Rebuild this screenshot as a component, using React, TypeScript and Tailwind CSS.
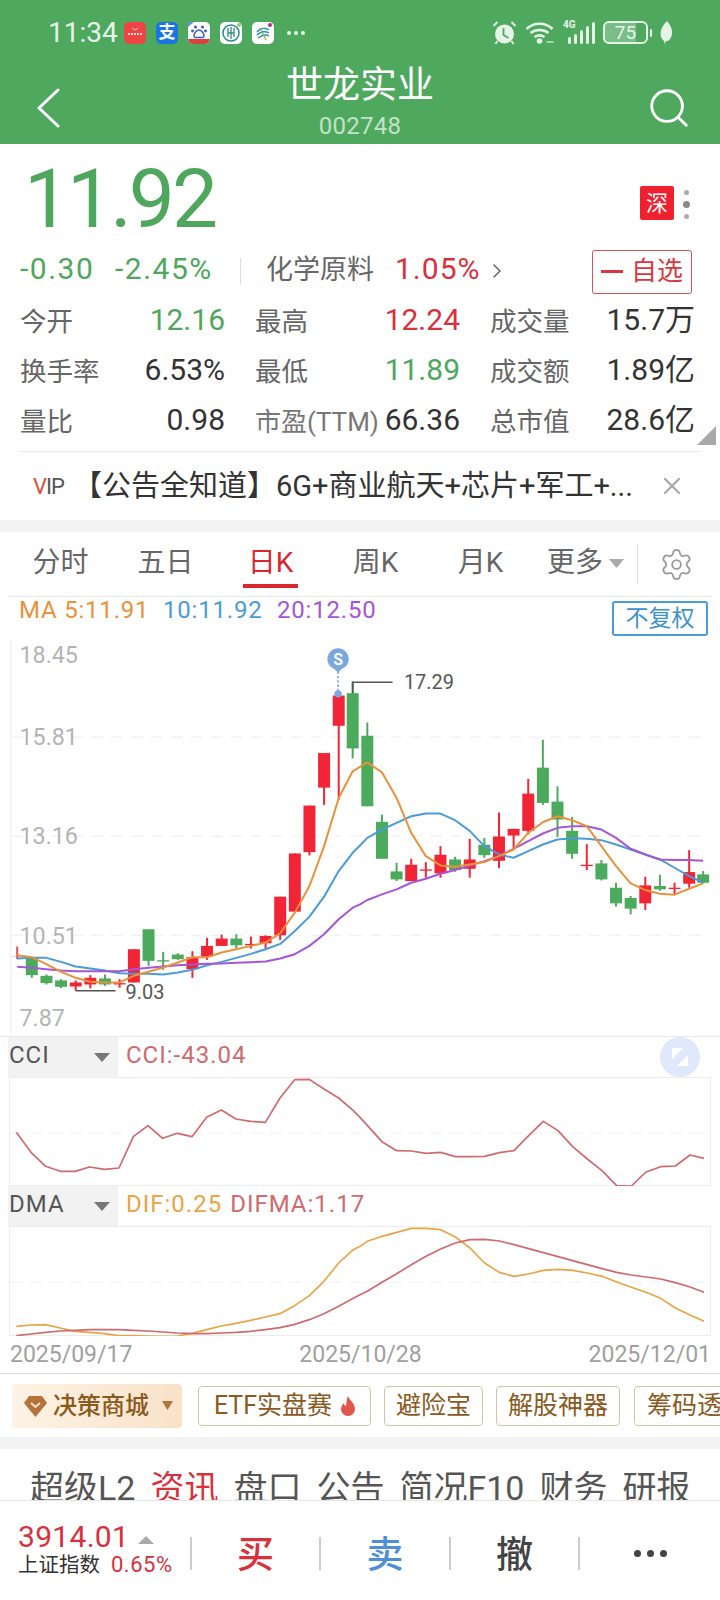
import { Search, Settings, X, ChevronRight } from "lucide-react";

type Candle = [number, number, number, number, number, "r" | "g"];

// x, body top, body bottom, wick top, wick bottom (3 units = 1px)
const candles: Candle[] = [
  [93, 985, 1038, 985, 1046, "g"],
  [137, 1040, 1062, 1036, 1066, "g"],
  [181, 1054, 1073, 1050, 1077, "g"],
  [225, 1060, 1072, 1054, 1085, "r"],
  [269, 1046, 1066, 1038, 1078, "r"],
  [313, 1048, 1066, 1036, 1070, "g"],
  [357, 1062, 1066, 1050, 1076, "r"],
  [400, 960, 1060, 960, 1060, "r"],
  [444, 900, 995, 900, 1010, "g"],
  [488, 993, 997, 968, 1022, "g"],
  [532, 976, 990, 972, 992, "g"],
  [576, 984, 1020, 966, 1046, "r"],
  [620, 950, 982, 926, 992, "r"],
  [664, 928, 950, 916, 950, "r"],
  [708, 928, 948, 915, 958, "g"],
  [752, 944, 948, 922, 958, "r"],
  [796, 920, 942, 918, 958, "r"],
  [840, 802, 918, 802, 932, "r"],
  [884, 672, 847, 672, 847, "r"],
  [928, 528, 668, 528, 678, "r"],
  [972, 370, 474, 370, 526, "r"],
  [1016, 197, 288, 197, 510, "r"],
  [1058, 190, 356, 155, 386, "g"],
  [1102, 318, 530, 278, 530, "g"],
  [1146, 577, 688, 555, 688, "g"],
  [1190, 726, 750, 700, 755, "g"],
  [1234, 706, 755, 688, 755, "r"],
  [1278, 720, 724, 698, 745, "r"],
  [1322, 676, 732, 650, 745, "r"],
  [1366, 690, 722, 682, 727, "g"],
  [1410, 690, 718, 628, 745, "r"],
  [1454, 646, 677, 625, 685, "g"],
  [1498, 621, 694, 549, 716, "r"],
  [1542, 598, 618, 598, 655, "r"],
  [1586, 492, 604, 448, 615, "r"],
  [1630, 414, 520, 330, 526, "g"],
  [1674, 516, 570, 470, 622, "g"],
  [1718, 604, 673, 562, 688, "g"],
  [1762, 706, 710, 644, 722, "r"],
  [1806, 702, 750, 692, 753, "g"],
  [1850, 775, 822, 760, 832, "g"],
  [1894, 806, 838, 800, 855, "g"],
  [1938, 768, 822, 742, 842, "r"],
  [1982, 770, 780, 736, 784, "g"],
  [2026, 775, 779, 760, 796, "r"],
  [2070, 728, 763, 662, 775, "r"],
  [2112, 735, 760, 725, 762, "g"],
];

const ma5 =
  "49,978 93,984 137,1005 181,1028 225,1046 269,1058 313,1060 357,1060 400,1040 444,1028 488,1015 532,1000 576,984 620,984 664,970 708,960 752,950 796,940 840,912 884,850 928,770 972,650 1016,505 1058,425 1102,398 1146,428 1190,505 1234,610 1278,680 1322,708 1366,712 1410,705 1454,698 1498,680 1542,660 1586,610 1630,578 1674,560 1718,572 1762,590 1806,650 1850,710 1894,762 1938,782 1982,793 2026,796 2070,778 2112,762";
const ma10 =
  "49,988 93,986 137,986 181,998 225,1012 269,1018 313,1024 357,1032 400,1034 444,1034 488,1036 532,1030 576,1022 620,1008 664,998 708,986 752,974 796,960 840,944 884,905 928,862 972,802 1016,725 1058,670 1080,648 1102,625 1146,600 1190,580 1234,560 1278,552 1322,552 1366,572 1410,604 1454,650 1498,675 1542,685 1586,665 1630,645 1674,630 1718,626 1762,628 1806,632 1850,645 1894,660 1938,675 1982,690 2026,715 2070,740 2112,760";
const ma20 =
  "49,1013 93,1016 137,1020 181,1024 225,1026 269,1026 313,1026 357,1026 400,1020 444,1016 488,1012 532,1008 576,1006 620,1004 664,1003 708,1001 752,999 796,997 840,988 884,975 928,950 972,915 1016,870 1058,835 1080,825 1102,812 1146,795 1190,780 1234,760 1278,748 1322,733 1366,722 1410,708 1454,695 1498,680 1542,658 1586,635 1630,612 1674,595 1718,590 1762,590 1806,600 1850,625 1894,658 1938,675 1982,690 2026,692 2070,692 2112,694";
const cci =
  "49,305 93,365 137,407 181,422 225,422 269,409 313,416 357,412 400,318 444,285 488,323 532,308 576,318 620,260 664,238 708,265 752,272 796,275 840,202 884,147 928,146 972,175 1016,202 1060,240 1080,260 1146,333 1190,360 1234,361 1278,368 1322,365 1366,378 1410,378 1454,377 1498,366 1542,360 1586,315 1630,272 1674,300 1718,348 1762,385 1806,420 1850,465 1894,466 1938,424 1982,408 2026,406 2070,373 2112,383";
const dif =
  "49,890 93,886 137,885 181,895 225,905 269,908 313,912 357,918 400,918 444,919 488,920 532,919 576,911 620,900 664,889 708,881 752,872 796,862 840,852 884,828 928,798 972,755 1016,700 1060,660 1080,650 1102,635 1146,620 1190,608 1234,596 1278,596 1322,600 1366,622 1410,655 1454,700 1498,728 1542,740 1586,733 1630,722 1674,719 1718,722 1762,730 1806,740 1850,757 1894,773 1938,788 1982,806 2026,835 2070,856 2112,875";
const difma =
  "49,918 93,913 137,908 181,904 225,902 269,900 313,900 357,900 400,902 444,904 488,907 532,910 576,912 620,912 664,910 708,908 752,905 796,900 840,894 884,884 928,870 972,852 1016,830 1060,806 1080,795 1102,785 1146,758 1190,732 1234,705 1278,680 1322,658 1366,640 1410,630 1454,629 1498,634 1542,645 1586,657 1630,669 1674,681 1718,693 1762,705 1806,717 1850,728 1894,736 1938,742 1982,748 2026,759 2070,772 2112,788";

function StatusBar() {
  return (
    <div className="flex h-[64px] items-center pl-[48px] pt-[1px] text-[#e6f4e8]">
      <span className="w-[76px] text-[28px] leading-none">11:34</span>
      <div className="flex gap-[10px]">
        <svg className="h-[22px] w-[22px]" viewBox="0 0 22 22">
          <rect width="22" height="22" rx="5" fill="#ef4444" />
          <path d="M8 6l3 2 3-2" stroke="#fff" strokeWidth="0.8" fill="none" />
          <path d="M4 12h14" stroke="#fff" strokeWidth="1.4" strokeDasharray="2 1" />
        </svg>
        <div className="flex h-[22px] w-[22px] items-center justify-center rounded-[5px] bg-[#1b74e4] text-[17px] font-bold leading-none text-white">
          支
        </div>
        <svg className="h-[22px] w-[22px]" viewBox="0 0 22 22">
          <rect width="22" height="22" rx="5" fill="#fff" />
          <path d="M0 17h22v0a5 5 0 0 1-5 5H5a5 5 0 0 1-5-5z" fill="#d9413c" />
          <circle cx="7.500" cy="5" r="1.500" fill="#3558c9" />
          <circle cx="14.500" cy="5" r="1.500" fill="#3558c9" />
          <circle cx="4.500" cy="9" r="1.400" fill="#3558c9" />
          <circle cx="17.500" cy="9" r="1.400" fill="#3558c9" />
          <path d="M11 8c3 0 5 4 5 6s-2 1.500-5 1.500-5 .5-5-1.500 2-6 5-6z" fill="none" stroke="#3558c9" strokeWidth="1.400" />
          <path d="M0 5V3a3 3 0 0 1 3-3h3z" fill="#6f8fe0" />
        </svg>
        <svg className="h-[22px] w-[22px]" viewBox="0 0 22 22">
          <rect width="22" height="22" rx="5" fill="#fff" />
          <circle cx="11" cy="11" r="8" fill="none" stroke="#2b8a86" strokeWidth="1.500" />
          <path d="M8 6v9M14 6v9M8 11h6M11 5v12" stroke="#2b8a86" strokeWidth="1.300" />
          <circle cx="19" cy="3" r="2" fill="#8fd37a" />
        </svg>
        <svg className="h-[22px] w-[22px]" viewBox="0 0 22 22">
          <rect width="22" height="22" rx="5" fill="#fff" />
          <path d="M5 10c4-5 9-4 12-2M5 13c4-4 9-4 12-2M6 16c4-3 8-4 11-2" stroke="#2c8fc4" strokeWidth="1.500" fill="none" />
          <path d="M8 6l6 12" stroke="#8bbf3f" strokeWidth="1.200" />
          <circle cx="18" cy="3" r="2" fill="#a2358a" />
        </svg>
      </div>
      <span className="ml-[13px] flex gap-[3px]">
        <i className="h-[4px] w-[4px] rounded-full bg-[#e6f4e8]" />
        <i className="h-[4px] w-[4px] rounded-full bg-[#e6f4e8]" />
        <i className="h-[4px] w-[4px] rounded-full bg-[#e6f4e8]" />
      </span>
      <div className="ml-auto mr-[47px] flex items-center">
        <svg className="h-[24px] w-[25px]" viewBox="0 0 24 24" fill="#e6f4e8">
          <path d="M1 5l4-4M23 5l-4-4" stroke="#e6f4e8" strokeWidth="1.800" />
          <circle cx="12" cy="13" r="9.500" />
          <path d="M11 7v7l5 3" stroke="#4ea95f" strokeWidth="1.800" fill="none" />
          <path d="M5 20l-2 3M19 20l2 3" stroke="#e6f4e8" strokeWidth="1.800" />
        </svg>
        <svg className="ml-[8px] h-[24px] w-[30px]" viewBox="0 0 29 24" fill="none" stroke="#e6f4e8" strokeWidth="2.600">
          <path d="M1 8c7-7 19-7 26 0M5 12c5-4 13-4 18 0M9 16c3-2 7-2 10 0" />
          <circle cx="14" cy="20" r="2.800" fill="#e6f4e8" stroke="none" />
          <path d="M21 21h7" strokeWidth="1.200" />
        </svg>
        <div className="relative ml-[8px] h-[24px] w-[32px]">
          <span className="absolute left-0 top-[-2px] text-[10px] font-bold leading-[12px]">4G</span>
          <svg className="h-[24px] w-[32px]" viewBox="0 0 32 24" fill="#e6f4e8">
            <rect x="5" y="16" width="3" height="7" rx="1.500" />
            <rect x="11" y="13" width="3" height="10" rx="1.500" />
            <rect x="17" y="9" width="3" height="14" rx="1.500" />
            <rect x="23" y="5" width="3" height="18" rx="1.500" />
            <rect x="29" y="1" width="3" height="22" rx="1.500" />
          </svg>
        </div>
        <div className="relative ml-[8px] flex h-[23px] w-[45px] items-center justify-center overflow-hidden rounded-[6px] border-2 border-[#e6f4e8] text-[19px] leading-none">
          <div className="absolute inset-y-0 left-0 w-[75%] bg-white/25" />
          <span className="relative">75</span>
        </div>
        <i className="ml-[2px] h-[8px] w-[2px] rounded-full bg-[#e6f4e8]" />
        <svg className="ml-[8px] h-[23px] w-[13px]" viewBox="0 0 13 23">
          <path d="M7 0c5 6 7 12 3 18-1 2-3 2-4 2l-1 3-1-3C-1 16-1 8 7 0z" fill="#e6f4e8" />
        </svg>
      </div>
    </div>
  );
}

function TitleBar() {
  return (
    <div className="relative flex h-[80px] flex-col items-center">
      <svg className="absolute left-[36px] top-[24px] h-[40px] w-[24px]" viewBox="0 0 24 40" fill="none">
        <path d="M22 2L3 20l19 18" stroke="#fff" strokeWidth="3" strokeLinecap="round" strokeLinejoin="round" />
      </svg>
      <div className="text-[37px] leading-[44px] text-white">世龙实业</div>
      <div className="mt-[4px] text-[24px] leading-[28px] tracking-[0.3px] text-[#c3e2c9]">002748</div>
      <Search
        className="absolute right-[28px] top-[21px] h-[46px] w-[46px] text-white"
        strokeWidth={1.500}
      />
    </div>
  );
}

function QuoteCell({
  label,
  value,
  color,
  wide,
}: {
  label: string;
  value: string;
  color: string;
  wide?: boolean;
}) {
  return (
    <div className="flex h-[50px] items-center justify-between">
      <span className={wide ? "text-[26px] text-[#777]" : "text-[26.500px] text-[#666]"}>{label}</span>
      <span className={`mt-[-5px] text-[30px] ${color}`}>{value}</span>
    </div>
  );
}

function Quote() {
  return (
    <div className="relative">
      <div className="flex h-[100px] items-start">
        <div className="ml-[24px] mt-[7px] text-[82px] leading-[96px] tracking-[-3px] text-[#4ea75d]">11.92</div>
        <div className="ml-auto mr-[46px] mt-[42px] flex h-[34px] w-[34px] items-center justify-center rounded-[2px] bg-[#f0202f] text-[22px] text-white">
          深
        </div>
        <div className="absolute right-[30px] top-[46px] flex flex-col items-center gap-[6px]">
          <i className="h-[5px] w-[5px] rounded-full bg-[#aaa]" />
          <i className="h-[7px] w-[7px] rounded-full bg-[#888]" />
          <i className="h-[5px] w-[5px] rounded-full bg-[#aaa]" />
        </div>
      </div>
      <div className="flex h-[53px] items-center pl-[20px]">
        <span className="mt-[-5px] w-[95px] text-[30px] tracking-[1.500px] text-[#4ea75d]">-0.30</span>
        <span className="mt-[-5px] w-[125px] text-[30px] tracking-[1.500px] text-[#4ea75d]">-2.45%</span>
        <i className="h-[26px] w-px bg-[#ddd]" />
        <span className="ml-[25px] text-[27px] text-[#666]">化学原料</span>
        <span className="ml-[21px] mt-[-5px] text-[30px] tracking-[1px] text-[#d9303c]">1.05%</span>
        <ChevronRight className="ml-[5px] h-[24px] w-[24px] text-[#666]" strokeWidth={1.500} />
        <div className="ml-auto mr-[28px] mt-[2px] flex h-[44px] w-[100px] items-center justify-center gap-[8px] rounded-[3px] border border-[#d9505a] text-[26px] text-[#d93842]">
          <i className="h-[3px] w-[22px] bg-[#d93842]" />
          <span>自选</span>
        </div>
      </div>
      <div className="grid grid-cols-[205px_205px_205px] gap-x-[30px] pl-[20px]">
        <QuoteCell label="今开" value="12.16" color="text-[#4ea75d]" />
        <QuoteCell label="最高" value="12.24" color="text-[#d9303c]" />
        <QuoteCell label="成交量" value="15.7万" color="text-[#333]" />
        <QuoteCell label="换手率" value="6.53%" color="text-[#333]" />
        <QuoteCell label="最低" value="11.89" color="text-[#4ea75d]" />
        <QuoteCell label="成交额" value="1.89亿" color="text-[#333]" />
        <QuoteCell label="量比" value="0.98" color="text-[#333]" />
        <QuoteCell label="市盈(TTM)" value="66.36" color="text-[#333]" wide />
        <QuoteCell label="总市值" value="28.6亿" color="text-[#333]" />
      </div>
      <svg className="absolute bottom-[7px] right-[4px] h-[19px] w-[19px]" viewBox="0 0 19 19">
        <path d="M19 0v19H0z" fill="#a9a9a9" />
      </svg>
      <div className="mx-[20px] mt-[4px] h-px bg-[#e8e8e8]" />
    </div>
  );
}

function Notice() {
  return (
    <div className="flex h-[68px] items-center pl-[33px]">
      <span className="w-[40px] shrink-0 text-[22px] tracking-[-1px] text-[#555]">
        <span className="text-[#d9503c]">V</span>IP
      </span>
      <span className="w-[556px] shrink-0 whitespace-nowrap text-[29px] leading-none text-[#333]">
        【公告全知道】6G+商业航天+芯片+军工+...
      </span>
      <X className="ml-[29px] h-[28px] w-[28px] text-[#aaa]" strokeWidth={2} />
    </div>
  );
}

function PeriodTabs() {
  const tabs = ["分时", "五日", "日K", "周K", "月K"];
  return (
    <div className="mx-[8px] flex h-[65px] items-start border-b border-[#e8e8e8] pt-[14px]">
      <div className="flex w-[525px]">
        {tabs.map((t) => (
          <div key={t} className="flex w-[105px] justify-center">
            <span
              className={
                t === "日K"
                  ? "border-b-4 border-[#d9272e] px-[5px] pb-[4px] text-[28px] leading-[34px] text-[#d9272e]"
                  : "border-b-4 border-transparent px-[5px] pb-[4px] text-[28px] leading-[34px] text-[#666]"
              }
            >
              {t}
            </span>
          </div>
        ))}
      </div>
      <span className="ml-[14px] text-[28px] leading-[34px] text-[#666]">更多</span>
      <svg className="ml-[6px] mt-[13px] h-[9px] w-[15px]" viewBox="0 0 15 9">
        <path d="M0 0h15L7.500 9z" fill="#aaa" />
      </svg>
      <i className="ml-[13px] mt-[-2px] h-[39px] w-px bg-[#ddd]" />
      <Settings className="ml-[21px] mt-[1px] h-[35px] w-[35px] text-[#999]" strokeWidth={1.200} />
    </div>
  );
}

function MaLegend() {
  return (
    <div className="flex h-[41px] items-start pl-[19px] text-[24px] leading-[26px] tracking-[0.8px]">
      <span className="w-[144px] text-[#e8923a]">MA 5:11.91</span>
      <span className="w-[114px] text-[#4b9bd8]">10:11.92</span>
      <span className="text-[#a555d6]">20:12.50</span>
      <span className="ml-auto mr-[12px] mt-[4px] flex h-[35px] w-[96px] items-center justify-center rounded-[3px] border-2 border-[#4b9bd8] text-[23px] leading-none tracking-normal text-[#3f93c9]">
        不复权
      </span>
    </div>
  );
}

function KChart() {
  const axis = [
    ["18.45", 75],
    ["15.81", 322],
    ["13.16", 620],
    ["10.51", 918],
    ["7.87", 1165],
  ] as const;
  return (
    <svg className="block h-[399px] w-[720px] border-b border-[#e8e8e8]" viewBox="0 24 2160 1197">
      <path d="M30 24v1197" stroke="#eee" strokeWidth="3" />
      {[322, 620, 918].map((y) => (
        <path key={y} d={`M30 ${y}H2127`} stroke="#eee" strokeWidth="3" strokeDasharray="36 24" />
      ))}
      <path d="M30 982H60" stroke="#f8d0d0" strokeWidth="3" />
      <path d="M49 952V990" stroke="#e0505a" strokeWidth="6" />
      {candles.map(([x, top, bottom, wickTop, wickBottom, c]) => {
        const fill = c === "r" ? "#f12535" : "#4caa5c";
        return (
          <g key={x}>
            <path d={`M${x} ${wickTop}V${wickBottom}`} stroke={fill} strokeWidth="6" />
            <rect x={x - 18} y={top} width="36" height={bottom - top} fill={fill} />
          </g>
        );
      })}
      <polyline points={ma10} fill="none" stroke="#4b9bd8" strokeWidth="6" strokeLinejoin="round" />
      <polyline points={ma20} fill="none" stroke="#a555d6" strokeWidth="6" strokeLinejoin="round" />
      <polyline points={ma5} fill="none" stroke="#e8923a" strokeWidth="6" strokeLinejoin="round" />
      <path d="M1014 125V190" stroke="#7aa7e0" strokeWidth="5" strokeDasharray="7 6" />
      <circle cx="1014" cy="192" r="11" fill="#7aa7e0" />
      <path d="M1000 114l14 14 14-14z" fill="#7aa7e0" />
      <circle cx="1014" cy="87" r="32" fill="#7aa7e0" />
      <text x="1014" y="104" textAnchor="middle" fontSize="48" fontWeight="700" fill="#fff">
        S
      </text>
      <path d="M1058 190V157H1178" fill="none" stroke="#555" strokeWidth="5" />
      <text x="1212" y="176" fontSize="60" fill="#555">
        17.29
      </text>
      <path d="M225 1085H345" stroke="#555" strokeWidth="5" />
      <text x="375" y="1109" fontSize="60" fill="#555">
        9.03
      </text>
      {axis.map(([t, y]) => (
        <text key={t} x="56" y={y + 25} fontSize="70" fill="#b4b4b4">
          {t}
        </text>
      ))}
    </svg>
  );
}

function IndicatorHead({ name, children }: { name: string; children: React.ReactNode }) {
  return (
    <div className="flex h-[40px] items-center text-[24px] leading-none tracking-[1px]">
      <div className="ml-[8px] flex h-full w-[110px] items-center bg-[#f2f2f2] pb-[5px] pl-[1px] text-[#555]">
        <span>{name}</span>
        <svg className="ml-auto mr-[8px] mt-[5px] h-[9px] w-[16px]" viewBox="0 0 16 9">
          <path d="M0 0h16L8 9z" fill="#777" />
        </svg>
      </div>
      <div className="ml-[8px] pb-[5px]">{children}</div>
    </div>
  );
}

function Indicators() {
  return (
    <div className="relative">
      <IndicatorHead name="CCI">
        <span className="text-[#cf6a6f]">CCI:-43.04</span>
      </IndicatorHead>
      <svg className="absolute right-[20px] top-0 h-[40px] w-[40px]" viewBox="0 0 40 40">
        <circle cx="20" cy="20" r="20" fill="#dfe9fb" />
        <path d="M12 11h11L12 22zM28 29H17l11-11z" fill="#fff" />
      </svg>
      <div className="mx-[9px] h-[109px] border border-[#ececec]">
        <svg className="block h-[108px] w-[702px]" viewBox="30 142 2106 324">
          <path d="M30 307H2136" stroke="#eee" strokeWidth="3" strokeDasharray="36 24" />
          <polyline points={cci} fill="none" stroke="#cf6a6f" strokeWidth="5" strokeLinejoin="round" />
        </svg>
      </div>
      <IndicatorHead name="DMA">
        <span className="text-[#e9a444]">DIF:0.25</span>
        <span className="ml-[8px] text-[#cf6a6f]">DIFMA:1.17</span>
      </IndicatorHead>
      <div className="mx-[9px] h-[110px] border border-[#ececec]">
        <svg className="block h-[109px] w-[702px]" viewBox="30 592 2106 327">
          <path d="M30 757H2136" stroke="#eee" strokeWidth="3" strokeDasharray="36 24" />
          <polyline points={dif} fill="none" stroke="#e9a444" strokeWidth="5" strokeLinejoin="round" />
          <polyline points={difma} fill="none" stroke="#cf6a6f" strokeWidth="5" strokeLinejoin="round" />
        </svg>
      </div>
      <div className="flex h-[38px] items-center justify-between border-b border-[#ddd] pl-[10px] pr-[9px] pt-[2px] text-[23px] text-[#a0a0a0]">
        <span>2025/09/17</span>
        <span>2025/10/28</span>
        <span>2025/12/01</span>
      </div>
    </div>
  );
}

function PromoRow() {
  const chip = "flex h-[40px] shrink-0 items-center justify-center rounded-[4px] border border-[#d9c3a6] text-[25px] text-[#8a5a1e]";
  return (
    <div className="flex h-[63px] items-center overflow-hidden pl-[12px]">
      <div className="flex h-[44px] w-[170px] shrink-0 items-center rounded-[4px] bg-gradient-to-r from-[#fdf3e6] to-[#f8e2c8] pl-[12px] text-[24px] font-medium text-[#8a5a1e]">
        <svg className="h-[22px] w-[23px]" viewBox="0 0 23 22">
          <path d="M5 1h13l5 7-11.500 14L0 8z" fill="#b5733a" />
          <path d="M7 8l4.500 4L16 8" fill="none" stroke="#f8e2c8" strokeWidth="2" />
        </svg>
        <span className="ml-[6px]">决策商城</span>
        <svg className="ml-[13px] h-[9px] w-[11px]" viewBox="0 0 11 9">
          <path d="M0 0h11L5.500 9z" fill="#b5733a" />
        </svg>
      </div>
      <div className={`${chip} ml-[16px] w-[173px] gap-[9px]`}>
        <span>ETF实盘赛</span>
        <svg className="h-[20px] w-[14px]" viewBox="0 0 14 20">
          <path d="M7 0c1 4 7 7 7 13a7 7 0 0 1-14 0c0-3 2-5 3-6 0 2 1 3 2 3 1-3 0-6 2-10z" fill="#e2574c" />
        </svg>
      </div>
      <div className={`${chip} ml-[13px] w-[99px]`}>避险宝</div>
      <div className={`${chip} ml-[13px] w-[124px]`}>解股神器</div>
      <div className={`${chip} ml-[14px] w-[110px] justify-start pl-[12px]`}>筹码透</div>
    </div>
  );
}

function DetailTabs() {
  const tabs = ["超级L2", "资讯", "盘口", "公告", "简况F10", "财务", "研报"];
  return (
    <div className="flex h-[51px] gap-[15px] overflow-hidden pl-[30px] pt-[19px] text-[34px] leading-[40px] text-[#555]">
      {tabs.map((t) => (
        <span key={t} className={t === "资讯" ? "shrink-0 text-[#d9303c]" : "shrink-0"}>
          {t}
        </span>
      ))}
    </div>
  );
}

function TradeBar() {
  const sep = <i className="h-[33px] w-[2px] bg-[#ccc]" />;
  return (
    <div className="flex h-[98px] items-start border-t border-[#e6e6e6] pt-[24px]">
      <div className="w-[191px] pl-[18px]">
        <div className="flex items-center">
          <span className="text-[30px] leading-[24px] tracking-[0.3px] text-[#d9303c]">3914.01</span>
          <svg className="ml-[9px] mt-[6px] h-[8px] w-[16px]" viewBox="0 0 16 8">
            <path d="M8 0l8 8H0z" fill="#aaa" />
          </svg>
        </div>
        <div className="mt-[4px] flex items-center">
          <span className="text-[20.500px] leading-[24px] text-[#333]">上证指数</span>
          <span className="ml-[11px] text-[22px] leading-[24px] tracking-[0.5px] text-[#d9303c]">0.65%</span>
        </div>
      </div>
      <div className="mt-[9px] flex items-center">
        {sep}
        <span className="flex w-[127px] justify-center pt-[5px] text-[37px] font-medium leading-[33px] text-[#d9303c]">买</span>
        {sep}
        <span className="flex w-[128px] justify-center pt-[5px] text-[37px] font-medium leading-[33px] text-[#4f8fd8]">卖</span>
        {sep}
        <span className="flex w-[127px] justify-center pt-[5px] text-[37px] font-medium leading-[33px] text-[#444]">撤</span>
        {sep}
        <span className="flex w-[140px] justify-center gap-[6px]">
          <i className="h-[7px] w-[7px] rounded-full bg-[#444]" />
          <i className="h-[7px] w-[7px] rounded-full bg-[#444]" />
          <i className="h-[7px] w-[7px] rounded-full bg-[#444]" />
        </span>
      </div>
    </div>
  );
}

export default function App() {
  return (
    <div className="flex h-[1600px] w-[720px] flex-col overflow-hidden bg-white font-[Roboto,'Noto_Sans_CJK_SC',sans-serif]">
      <div className="h-[144px] bg-[#4ea95f]">
        <StatusBar />
        <TitleBar />
      </div>
      <Quote />
      <Notice />
      <div className="h-[12px] bg-[#f3f3f3]" />
      <PeriodTabs />
      <MaLegend />
      <KChart />
      <Indicators />
      <PromoRow />
      <div className="h-[12px] bg-[#f3f3f3]" />
      <DetailTabs />
      <TradeBar />
    </div>
  );
}
